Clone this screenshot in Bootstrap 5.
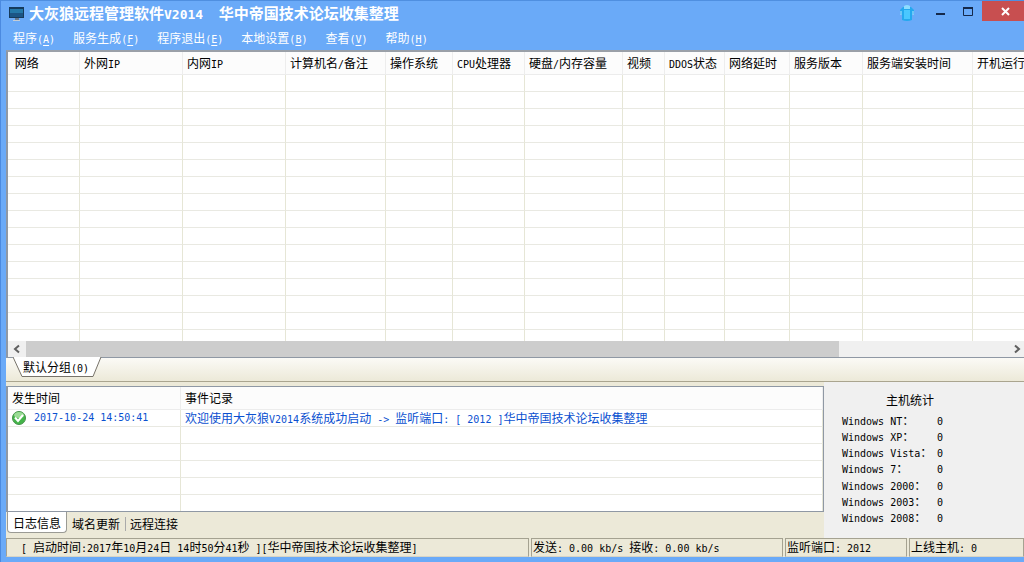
<!DOCTYPE html>
<html lang="zh-CN">
<head>
<meta charset="utf-8">
<meta name="viewport" content="width=device-width, initial-scale=1">
<title>大灰狼远程管理软件V2014</title>
<link href="https://cdn.jsdelivr.net/npm/bootstrap@5.3.0/dist/css/bootstrap.min.css" rel="stylesheet">
<style>
  body { font: 12px/16px "Noto Sans CJK SC", sans-serif; color: #000; background: #6aaaf8; }
  button { font: inherit; color: inherit; background: none; border: 0; padding: 0; }
  .en { font-family: "DejaVu Sans Mono", monospace; font-size: 10px; line-height: 10px; white-space: pre; }
  .win { height: 100vh; padding-left: 5px; padding-bottom: 5px; border-left: 1px solid #4b8ae0; border-top: 1px solid #4f8fe0; overflow: hidden; }
  .caption { height: 26px; color: #fff; }
  .caption h1 { font-size: 15px; line-height: 24px; font-weight: 700; }
  .caption h1 .en { font-size: 13px; }
  .win-btn { width: 27px; height: 20px; }
  .win-close { width: 42px; height: 20px; background: #c84f50; }
  .menus { height: 23px; gap: 18px; padding-left: 7px; color: #fff; line-height: 22px; }
  .menus u { text-underline-offset: 2px; }
  .frame { border-left: 2px solid #8f98a4; border-top: 1px solid #8f98a4; background: #fff; overflow: hidden; }
  .main-list { min-height: 0; border-top: 2px solid #9aa0a8; }
  .grid-list { table-layout: fixed; border-collapse: separate; border-spacing: 0; width: 100%; }
  .grid-list th { height: 23px; padding: 0 5px; font-weight: 400; white-space: nowrap; background: #fcfcfc; border-right: 1px solid #ededed; border-bottom: 1px solid #ececec; }
  .grid-list td { height: 17px; padding: 0 5px; line-height: 16px; white-space: nowrap; border-right: 1px solid #e6e6d6; border-bottom: 1px solid #e9e9e2; }
  .grid-list th:last-child { padding: 0 0 0 4px; }
  #hosts th:last-child, #hosts td:last-child { border-right: 0; }
  #hosts th { padding-left: 4px; }
  .scroller { height: 16px; background: #f0f0f0; border-left: 2px solid #8f98a4; }
  .scroller button { width: 18px; line-height: 0; }
  .thumb { width: 83%; background: #cdcdcd; }
  .groups { height: 25px; border-top: 1px solid #8f98a4; border-bottom: 1px solid #aaa58f; background: linear-gradient(#fbfaf6, #ece9d8); padding-left: 7px; }
  .group-tab { width: 90px; height: 20px; line-height: 16px; padding: 0 4px 2px 0; }
  .group-tab svg { left: 0; top: -1px; }
  .group-tab span { position: relative; }
  .lower { height: 156px; background: #ece9d8; }
  .log { height: 126px; border-right: 1px solid #8f98a4; border-bottom: 1px solid #8f98a4; }
  .log th:last-child, .log td:last-child { padding-left: 4px; }
  .log td { color: #0a50d0; }
  .stats { width: 200px; background: #f0f0f0; padding: 10px 0 13px 18px; }
  .stats h2 { font-size: 12px; line-height: 16px; width: 136px; }
  .stats dt { width: 95px; font-weight: 400; line-height: 16px; }
  .pages { padding-left: 1px; }
  .pages button { height: 21px; padding: 2px 5px 0; }
  .pages .on { background: #fff; border: 1px solid #9a9a94; border-top: 0; border-radius: 0 0 4px 4px; }
  .pages .sep { border-left: 1px solid #aaa; padding: 0 4px; height: 14px; line-height: 14px; margin-top: 5px; }
  .status { display: grid; grid-template-columns: 523fr 252fr 122fr 115fr; gap: 2px; height: 19px; background: #ece9d8; }
  .status div { border: 1px solid #a5a291; border-bottom-color: #d8d5c6; line-height: 15px; padding-left: 1px; white-space: nowrap; overflow: hidden; }
  .status div:first-child { padding-left: 14px; }
</style>
</head>
<body>
<div class="win d-flex flex-column">
  <header class="caption d-flex align-items-start flex-shrink-0">
    <svg class="mt-1 me-1 flex-shrink-0" width="19" height="18" viewBox="-3 0 19 18"><path d="M0 2h15v11H0z" fill="#163b5c"/><path d="M1 4h13v4H1z" fill="#2478a8"/><path d="M1 8h13v4H1z" fill="#1b5585"/><path d="M6 13h4v2H6z" fill="#65788c"/><path d="M4 15h7v1H4z" fill="#c5cdd5"/></svg>
    <h1 class="m-0 text-nowrap">大灰狼远程管理软件<span class="en">V2014  </span>华中帝国技术论坛收集整理</h1>
    <div class="d-flex ms-auto">
      <button class="me-2" aria-label="皮肤"><svg width="18" height="22" viewBox="0 0 18 22"><path d="M5 6h8l3 3v4l-2 1v5q-5 2-10 0v-5l-2-1V9z" fill="#24a9ef"/><path d="M6 5q3-2 6 0v3H6z" fill="#8ddcff"/><path d="M6 9h6v9H6z" fill="#49c8ff"/><path d="M3 10v4M15 10v4" stroke="#b3e5ff"/></svg></button>
      <button class="win-btn" aria-label="最小化"><svg width="27" height="20"><path d="M12 12h9v2h-9z" fill="#15294a"/></svg></button>
      <button class="win-btn" aria-label="最大化"><svg width="27" height="20"><path d="M12.500 6.500h9v8h-9z" fill="none" stroke="#15294a"/><path d="M12 6h10v2H12z" fill="#15294a"/></svg></button>
      <button class="win-close ms-1" aria-label="关闭"><svg width="42" height="20"><path d="M20 7l7 7M27 7l-7 7" stroke="#fff" stroke-width="2"/></svg></button>
    </div>
  </header>
  <nav class="menus d-flex flex-shrink-0 text-nowrap align-items-start">
    <button>程序<span class="en">(<u>A</u>)</span></button><button>服务生成<span class="en">(<u>F</u>)</span></button><button>程序退出<span class="en">(<u>E</u>)</span></button><button>本地设置<span class="en">(<u>B</u>)</span></button><button>查看<span class="en">(<u>V</u>)</span></button><button>帮助<span class="en">(<u>H</u>)</span></button>
  </nav>
  <div class="frame main-list flex-fill">
    <table class="grid-list" id="hosts">
      <colgroup><col width="72"><col width="103"><col width="103"><col width="100"><col width="67"><col width="72"><col width="98"><col width="42"><col width="60"><col width="65"><col width="73"><col width="110"><col></colgroup>
      <thead><tr><th>&nbsp;网络</th><th>外网<span class="en">IP</span></th><th>内网<span class="en">IP</span></th><th>计算机名<span class="en">/</span>备注</th><th>操作系统</th><th><span class="en">CPU</span>处理器</th><th>硬盘<span class="en">/</span>内存容量</th><th>视频</th><th><span class="en">DDOS</span>状态</th><th>网络延时</th><th>服务版本</th><th>服务端安装时间</th><th>开机运行</th></tr></thead>
      <tbody></tbody>
    </table>
  </div>
  <div class="scroller d-flex flex-shrink-0">
    <button aria-label="向左"><svg width="18" height="16"><path d="M11 4.500L7 8l4 3.500" fill="none" stroke="#606060" stroke-width="2"/></svg></button>
    <div class="flex-fill d-flex"><div class="thumb"></div></div>
    <button aria-label="向右"><svg width="18" height="16"><path d="M9 4.500L13 8l-4 3.500" fill="none" stroke="#606060" stroke-width="2"/></svg></button>
  </div>
  <div class="groups flex-shrink-0">
    <button class="group-tab position-relative"><svg class="position-absolute" width="90" height="21"><path d="M0 0L9 19.500H80L88 0" fill="#fff" stroke="#77736a"/></svg><span>默认分组<span class="en">(0)</span></span></button>
  </div>
  <div class="lower d-flex flex-shrink-0">
    <div class="flex-fill pt-1" style="min-width:0">
      <div class="frame log">
        <table class="grid-list" id="log">
          <colgroup><col width="173"><col></colgroup>
          <thead><tr><th class="ps-1">发生时间</th><th>事件记录</th></tr></thead>
          <tbody><tr><td class="ps-1"><div class="d-flex align-items-center gap-2"><svg width="14" height="14" viewBox="0 0 14 14"><circle cx="7" cy="7" r="6.500" fill="#44b549" stroke="#46914a"/><ellipse cx="7" cy="4" rx="5" ry="3" fill="#9bdc95"/><path d="M3 6.500l3 3.500 5-6" fill="none" stroke="#fff" stroke-width="2"/></svg><span class="en">2017-10-24 14:50:41</span></div></td><td>欢迎使用大灰狼<span class="en">V2014</span>系统成功启动<span class="en"> -&gt; </span>监听端口<span class="en">: [ 2012 ]</span>华中帝国技术论坛收集整理</td></tr></tbody>
        </table>
      </div>
      <div class="pages d-flex"><button class="on">日志信息</button><button>域名更新</button><button class="sep">远程连接</button></div>
    </div>
    <section class="stats d-flex flex-column flex-shrink-0">
      <h2 class="text-center fw-normal m-0">主机统计</h2>
      <dl class="m-0 pt-1 flex-fill d-flex flex-column">
        <div class="d-flex flex-fill align-items-baseline"><dt><span class="en">Windows NT</span>：</dt><dd class="en m-0">0</dd></div>
        <div class="d-flex flex-fill align-items-baseline"><dt><span class="en">Windows XP</span>：</dt><dd class="en m-0">0</dd></div>
        <div class="d-flex flex-fill align-items-baseline"><dt><span class="en">Windows Vista</span>：</dt><dd class="en m-0">0</dd></div>
        <div class="d-flex flex-fill align-items-baseline"><dt><span class="en">Windows 7</span>：</dt><dd class="en m-0">0</dd></div>
        <div class="d-flex flex-fill align-items-baseline"><dt><span class="en">Windows 2000</span>：</dt><dd class="en m-0">0</dd></div>
        <div class="d-flex flex-fill align-items-baseline"><dt><span class="en">Windows 2003</span>：</dt><dd class="en m-0">0</dd></div>
        <div class="d-flex flex-fill align-items-baseline"><dt><span class="en">Windows 2008</span>：</dt><dd class="en m-0">0</dd></div>
      </dl>
    </section>
  </div>
  <footer class="status flex-shrink-0">
    <div><span class="en">[ </span>启动时间<span class="en">:2017</span>年<span class="en">10</span>月<span class="en">24</span>日<span class="en"> 14</span>时<span class="en">50</span>分<span class="en">41</span>秒<span class="en"> ][</span>华中帝国技术论坛收集整理<span class="en">]</span></div>
    <div>发送<span class="en">: 0.00 kb/s </span>接收<span class="en">: 0.00 kb/s</span></div>
    <div>监听端口<span class="en">: 2012</span></div>
    <div>上线主机<span class="en">: 0</span></div>
  </footer>
</div>
<script src="https://cdn.jsdelivr.net/npm/bootstrap@5.3.0/dist/js/bootstrap.bundle.min.js"></script>
<script>
  // Fill each list with empty ruled rows below its entries
  function addRows(id, rows, cols) {
    const body = document.querySelector('#' + id + ' tbody');
    for (let i = 0; i < rows; i++) {
      const tr = body.insertRow();
      for (let c = 0; c < cols; c++) tr.insertCell();
    }
  }
  addRows('hosts', 60, 13);
  addRows('log', 6, 2);
</script>
</body>
</html>
